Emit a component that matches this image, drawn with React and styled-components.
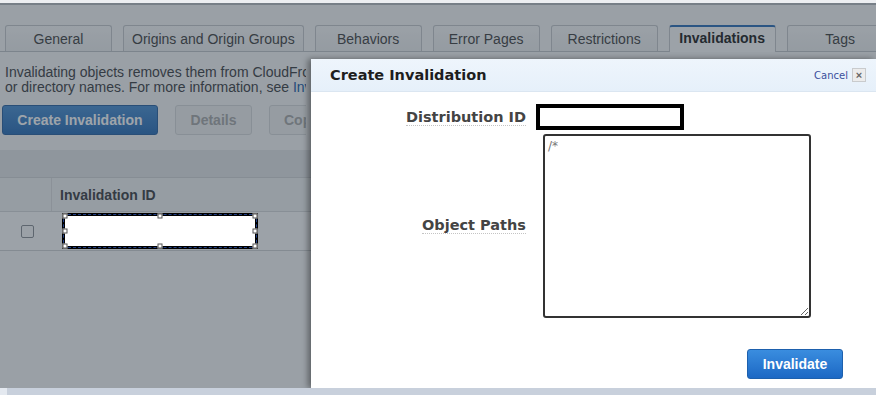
import styled, { createGlobalStyle } from 'styled-components';

const GlobalStyle = createGlobalStyle`
  html, body {
    margin: 0;
    padding: 0;
    background: #c9d1db;
    overflow: hidden;
  }
  * { box-sizing: border-box; }
`

const Frame = styled.div`
  width: 876px;
  height: 395px;
  display: flex;
  flex-direction: column;
  background: #c9d1db;
`
const TopStrip = styled.div`
  height: 3px;
  background: #eceef1;
  flex: none;
`
const Screen = styled.div`
  position: relative;
  height: 385px;
  flex: none;
  overflow: hidden;
  background: #f7f7f7;
  font-family: "Liberation Sans", Arial, sans-serif;
  color: #3f4245;
`
const Page = styled.div`
  border-top: 2px solid #b9bcc0;
  padding-top: 20px;
`
const TabRow = styled.div`
  display: flex;
  gap: 11px;
  padding-left: 5px;
  border-bottom: 1px solid #c2c5c9;
  height: 27px;
`
const Tab = styled.div`
  flex: none;
  min-width: 107px;
  height: ${p => (p.$active ? '27px' : '26px')};
  padding: 0 8px;
  display: flex;
  align-items: center;
  justify-content: center;
  font-size: 14px;
  border: 1px solid #c6c9cc;
  border-bottom: none;
  border-top: ${p => (p.$active ? '2px solid #2f6fb8' : '1px solid #c6c9cc')};
  border-radius: 3px 3px 0 0;
  background: ${p => (p.$active ? '#fbfbfb' : 'linear-gradient(#f9f9f9, #eeeff0)')};
  font-weight: ${p => (p.$active ? 700 : 400)};
  color: ${p => (p.$active ? '#222' : '#444')};
  padding-bottom: ${p => (p.$active ? '3px' : '0')};
`
const Intro = styled.p`
  margin: 0;
  padding: 13px 0 0 5px;
  width: 306px;
  overflow: hidden;
  font-size: 14px;
  line-height: 15px;
  white-space: nowrap;
  a { color: #1a5ea8; text-decoration: none; }
`
const Toolbar = styled.div`
  display: flex;
  gap: 17px;
  padding: 10px 0 0 2px;
  width: 306px;
  overflow: hidden;
`
const Button = styled.div`
  flex: none;
  height: 30px;
  padding: 0 14px;
  display: flex;
  align-items: center;
  font-size: 14px;
  font-weight: 700;
  border-radius: 3px;
  border: 1px solid ${p => (p.$primary ? '#2a63a3' : '#d8d9da')};
  background: ${p => (p.$primary ? 'linear-gradient(#4b8fd2, #2c6fb7)' : '#f1f1f1')};
  color: ${p => (p.$primary ? '#fff' : '#aaa')};
  min-width: ${p => p.$w || 0}px;
  justify-content: center;
`
const Table = styled.div`
  margin-top: 15px;
`
const Band = styled.div`
  height: 28px;
  background: #e4e5e7;
  border-bottom: 1px solid #d4d6d8;
`
const HeadRow = styled.div`
  display: grid;
  grid-template-columns: 51px 1fr;
  height: 34px;
  background: #f1f2f3;
  border-bottom: 1px solid #d8d9db;
`
const HeadCell = styled.div`
  display: flex;
  align-items: center;
  padding-left: 8px;
  font-size: 14px;
  font-weight: 700;
  color: #3e4144;
  border-left: ${p => (p.$first ? 'none' : '1px solid #dcdddf')};
`
const BodyRow = styled.div`
  display: grid;
  grid-template-columns: 51px 1fr;
  height: 39px;
  border-bottom: 1px solid #cfd1d3;
  background: #fbfbfb;
`
const CheckCell = styled.div`
  display: flex;
  align-items: center;
  justify-content: center;
  padding-left: 3px;
`
const CheckBox = styled.div`
  width: 13px;
  height: 13px;
  border: 1px solid #8b8f94;
  border-radius: 2px;
  background: #fafafa;
`
const IdCell = styled.div`
  display: flex;
  align-items: center;
  padding-left: 11px;
`
const Redaction = styled.div`
  position: relative;
  z-index: 3;
  width: 196px;
  height: 36px;
  background: #fff;
  border: 3px solid #000;
  outline: 1px dashed #1f3f8a;
  outline-offset: -2px;
`
const Handle = styled.span`
  position: absolute;
  width: 5px;
  height: 5px;
  background: #fff;
  border: 1px solid #555;
  left: ${p => p.$x};
  top: ${p => p.$y};
  transform: translate(-50%, -50%);
`
const Dim = styled.div`
  position: absolute;
  inset: 0;
  z-index: 2;
  background: rgba(39, 53, 66, 0.45);
`
const Modal = styled.div`
  position: absolute;
  z-index: 4;
  left: 311px;
  top: 56px;
  right: 0;
  bottom: 0;
  background: #fff;
  box-shadow: -3px 0 6px rgba(0, 0, 0, 0.4);
  font-family: "DejaVu Sans", Verdana, sans-serif;
  display: flex;
  flex-direction: column;
`
const ModalHeader = styled.div`
  height: 33px;
  flex: none;
  display: flex;
  align-items: center;
  justify-content: space-between;
  padding: 0 10px 0 19px;
  background: linear-gradient(#eef5fc, #e6f0fa);
  border-bottom: 1px solid #dbe6f1;
`
const ModalTitle = styled.div`
  font-size: 14.5px;
  font-weight: 700;
  color: #1e1e1e;
`
const CancelBox = styled.div`
  display: flex;
  align-items: center;
  gap: 4px;
  font-size: 10px;
  color: #3b4f9b;
`
const CloseButton = styled.div`
  width: 14px;
  height: 14px;
  border: 1px solid #c9cbcd;
  background: #ececec;
  color: #666;
  font-size: 11px;
  font-weight: 700;
  line-height: 12px;
  text-align: center;
  font-family: "Liberation Sans", Arial, sans-serif;
`
const Form = styled.div`
  display: grid;
  grid-template-columns: 215px 1fr;
  column-gap: 17px;
  row-gap: 3px;
  align-items: center;
  padding-top: 12px;
`
const Label = styled.div`
  justify-self: end;
  font-size: 14.5px;
  font-weight: 700;
  color: #444;
  border-bottom: 1px dotted #c4c4c4;
  line-height: 16px;
`
const IdField = styled.div`
  margin-left: -7px;
  width: 148px;
  height: 26px;
  border: 4px solid #000;
  background: #fff;
`
const Paths = styled.textarea`
  width: 268px;
  height: 184px;
  margin-top: 1px;
  border: 2px solid #333;
  border-radius: 3px;
  padding: 3px 3px;
  font-family: "DejaVu Sans", Verdana, sans-serif;
  font-size: 12px;
  color: #777;
  resize: both;
  outline: none;
`
const Footer = styled.div`
  display: flex;
  justify-content: flex-end;
  padding: 31px 33px 0 0;
`
const Invalidate = styled.div`
  width: 96px;
  height: 30px;
  display: flex;
  align-items: center;
  justify-content: center;
  border-radius: 3px;
  border: 1px solid #1d60ad;
  background: linear-gradient(#3a8ddf, #1c68c4);
  color: #fff;
  font-family: "Liberation Sans", Arial, sans-serif;
  font-size: 14px;
  font-weight: 700;
`
const BottomStrip = styled.div`
  flex: 1;
  background: linear-gradient(90deg, #e4e9f0 0, #e4e9f0 7px, #c8d0dc 7px);
`

const tabs = ['General', 'Origins and Origin Groups', 'Behaviors', 'Error Pages', 'Restrictions', 'Invalidations', 'Tags']
const handles = [['0', '0'], ['50%', '0'], ['100%', '0'], ['0', '50%'], ['100%', '50%'], ['0', '100%'], ['50%', '100%'], ['100%', '100%']]

const App = () => {
  return (
    <Frame>
      <GlobalStyle />
      <TopStrip />
      <Screen>
        <Page>
          <TabRow>
            {tabs.map(t => (
              <Tab key={t} $active={t === 'Invalidations'}>{t}</Tab>
            ))}
          </TabRow>
          <Intro>
            Invalidating objects removes them from CloudFront edge caches.<br />
            or directory names. For more information, see <a href="">Invalidating Objects</a>.
          </Intro>
          <Toolbar>
            <Button $primary $w={156}>Create Invalidation</Button>
            <Button $w={77}>Details</Button>
            <Button>Copy</Button>
          </Toolbar>
          <Table>
            <Band />
            <HeadRow>
              <HeadCell $first />
              <HeadCell>Invalidation ID</HeadCell>
            </HeadRow>
            <BodyRow>
              <CheckCell><CheckBox /></CheckCell>
              <IdCell>
                <Redaction>
                  {handles.map(([x, y]) => <Handle key={x + y} $x={x} $y={y} />)}
                </Redaction>
              </IdCell>
            </BodyRow>
          </Table>
        </Page>
        <Dim />
        <Modal>
          <ModalHeader>
            <ModalTitle>Create Invalidation</ModalTitle>
            <CancelBox>
              Cancel
              <CloseButton>×</CloseButton>
            </CancelBox>
          </ModalHeader>
          <Form>
            <Label>Distribution ID</Label>
            <IdField />
            <Label>Object Paths</Label>
            <Paths defaultValue="/*" />
          </Form>
          <Footer>
            <Invalidate>Invalidate</Invalidate>
          </Footer>
        </Modal>
      </Screen>
      <BottomStrip />
    </Frame>
  )
}

export default App
